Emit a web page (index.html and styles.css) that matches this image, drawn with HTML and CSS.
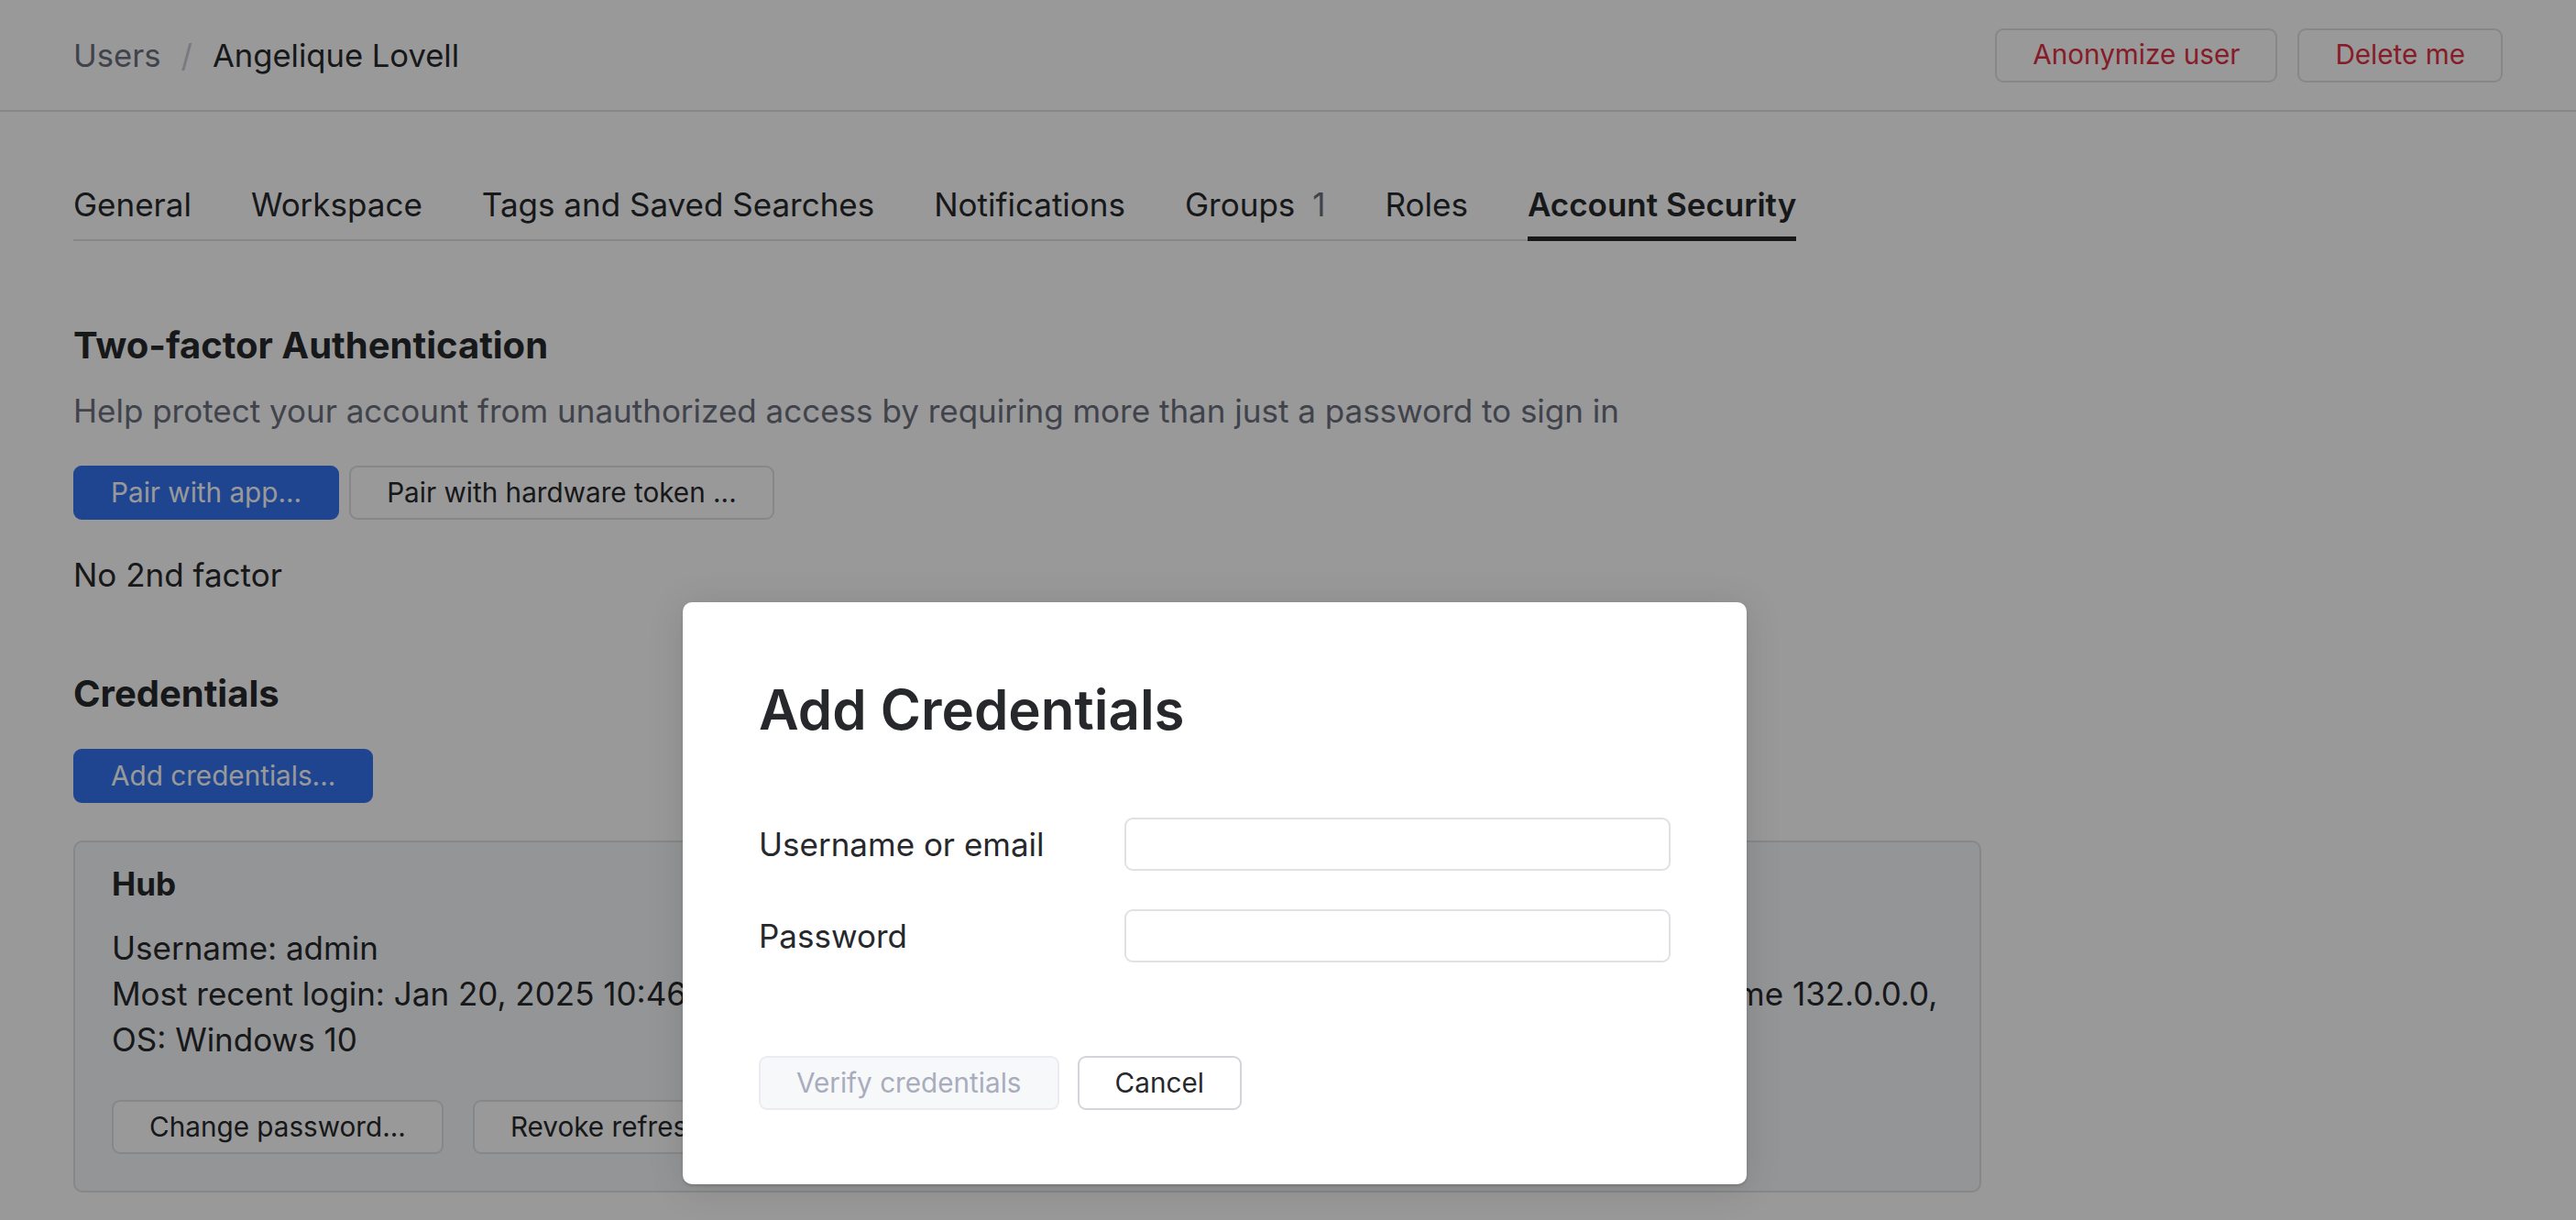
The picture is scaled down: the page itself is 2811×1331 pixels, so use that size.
FILE: index.html
```html
<!DOCTYPE html>
<html lang="en">
<head>
<meta charset="utf-8">
<title>Angelique Lovell — Account Security</title>
<link rel="stylesheet" href="styles.css">
</head>
<body>
<div class="page">
  <header class="header">
    <nav class="crumbs">
      <span class="crumb-link">Users</span>
      <span class="crumb-sep">/</span>
      <span class="crumb-current">Angelique Lovell</span>
    </nav>
    <div class="actions">
      <button class="btn btn-danger">Anonymize user</button>
      <button class="btn btn-danger">Delete me</button>
    </div>
  </header>

  <main class="main">
    <div class="tabs">
      <span class="tab">General</span>
      <span class="tab">Workspace</span>
      <span class="tab">Tags and Saved Searches</span>
      <span class="tab">Notifications</span>
      <span class="tab">Groups<span class="count">1</span></span>
      <span class="tab">Roles</span>
      <span class="tab active">Account Security</span>
    </div>

    <section class="section first">
      <h2 class="section-title">Two-factor Authentication</h2>
      <p class="help">Help protect your account from unauthorized access by requiring more than just a password to sign in</p>
      <div class="btn-row">
        <button class="btn btn-primary">Pair with app...</button>
        <button class="btn">Pair with hardware token ...</button>
      </div>
      <p class="status">No 2nd factor</p>
    </section>

    <section class="section second">
      <h2 class="section-title">Credentials</h2>
      <div class="btn-row">
        <button class="btn btn-primary">Add credentials...</button>
      </div>
      <div class="card">
        <div class="card-title">Hub</div>
        <div class="card-body">
          <div>Username: admin</div>
          <div>Most recent login: Jan 20, 2025 10:46 from 172.217.10.11, Service: YouTrack Web Application, Browser: Chrome 132.0.0.0,<br>OS: Windows 10</div>
        </div>
        <div class="card-actions">
          <button class="btn">Change password...</button>
          <button class="btn">Revoke refresh tokens</button>
        </div>
      </div>
    </section>
  </main>

  <div class="overlay"></div>

  <div class="dialog" role="dialog">
    <h1 class="dialog-title">Add Credentials</h1>
    <div class="form">
      <label class="form-label" for="login">Username or email</label>
      <input class="form-input" id="login" type="text">
      <label class="form-label" for="pwd">Password</label>
      <input class="form-input" id="pwd" type="password">
    </div>
    <div class="dialog-footer">
      <button class="btn btn-disabled">Verify credentials</button>
      <button class="btn btn-plain">Cancel</button>
    </div>
  </div>
</div>
</body>
</html>
```

FILE: styles.css
```css
* { box-sizing: border-box; }

html, body {
  margin: 0;
  padding: 0;
  background: #ffffff;
}

body {
  font-family: Inter, "Noto Sans", "Liberation Sans", sans-serif;
  font-size: 35px;
  line-height: 50px;
  color: #27282c;
}

.page {
  position: relative;
  width: 2811px;
  height: 1331px;
  overflow: hidden;
}

/* Header */
.header {
  height: 122px;
  border-bottom: 2px solid #dfe1e5;
  display: flex;
  align-items: center;
  justify-content: space-between;
  padding: 0 80px 0 80px;
}

.crumbs {
  display: flex;
  align-items: center;
  gap: 22px;
  font-size: 34.6px;
}

.crumb-link { color: #6c707e; }
.crumb-sep { color: #c9ccd6; }
.crumb-current { color: #27282c; }

.actions {
  display: flex;
  gap: 22px;
}

/* Buttons */
.btn {
  height: 59px;
  padding: 0 39px;
  border: 2px solid #dfe1e5;
  border-radius: 9px;
  background: #ffffff;
  color: #27282c;
  font-family: Inter, "Noto Sans", "Liberation Sans", sans-serif;
  font-size: 29.7px;
  line-height: 1;
  display: inline-flex;
  align-items: center;
  justify-content: center;
  white-space: nowrap;
  margin: 0;
}

.btn-danger { color: #e02f44; }

.btn-primary {
  background: #3574f0;
  border-color: #3574f0;
  color: #ffffff;
}

.btn-disabled {
  background: #f7f8fa;
  border-color: #ebecf0;
  color: #a8adbd;
}

.btn-plain { border-color: #d3d5db; }

/* Tabs */
.main {
  padding: 76px 0 0 80px;
}

.tabs {
  display: inline-flex;
  gap: 65px;
  box-shadow: inset 0 -2px 0 #dfe1e5;
}

.tab {
  padding-bottom: 15px;
  white-space: nowrap;
}

.tab.active {
  font-weight: 600;
  box-shadow: inset 0 -5px 0 #27282c;
}

.count {
  color: #6c707e;
  margin-left: 19px;
}

/* Sections */
.section-title {
  margin: 0;
  font-size: 40px;
  line-height: 50px;
  font-weight: 700;
}

.section.first { margin-top: 89px; }
.section.second { margin-top: 80px; }

.help {
  margin: 21px 0 0;
  color: #6c707e;
}

.btn-row {
  display: flex;
  gap: 11px;
  margin-top: 35px;
}

.status {
  margin: 35px 0 0;
}

.card {
  margin-top: 41px;
  width: 2082px;
  border: 2px solid #dfe1e5;
  border-radius: 10px;
  background: #f7f8fa;
  padding: 20px 40px 40px;
}

.card-title {
  font-weight: 700;
}

.card-body {
  margin-top: 20px;
}

.card-actions {
  display: flex;
  gap: 32px;
  margin-top: 41px;
}

/* Overlay + dialog */
.overlay {
  position: absolute;
  inset: 0;
  background: rgba(0, 0, 0, 0.4);
}

.dialog {
  position: absolute;
  left: 745px;
  top: 657px;
  width: 1161px;
  padding: 81px 83px 81px;
  background: #ffffff;
  border-radius: 10px;
  box-shadow: 0 2px 3px rgba(0, 0, 0, 0.14), 0 4px 40px rgba(0, 0, 0, 0.12);
}

.dialog-title {
  margin: 0;
  font-size: 60px;
  line-height: 72px;
  font-weight: 600;
  color: #27282c;
}

.form {
  margin-top: 82px;
  display: grid;
  grid-template-columns: 399px 1fr;
  row-gap: 42px;
  align-items: center;
}

.form-label {
  color: #27282c;
}

.form-input {
  height: 58px;
  width: 100%;
  border: 2px solid #dfe1e5;
  border-radius: 9px;
  background: #ffffff;
  font-family: inherit;
  font-size: 31px;
  padding: 0 16px;
  margin: 0;
}

.dialog-footer {
  margin-top: 102px;
  display: flex;
  gap: 20px;
}
```
